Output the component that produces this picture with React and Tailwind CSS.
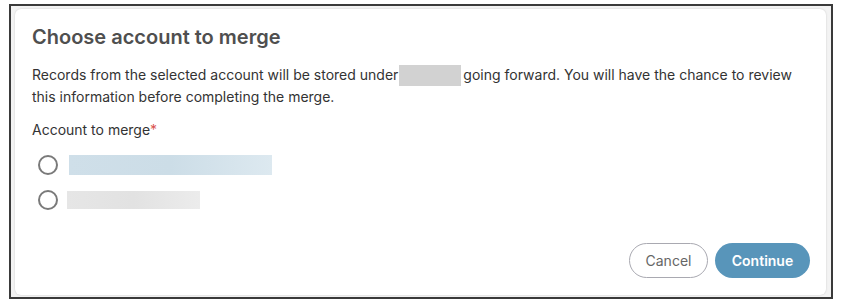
export default function App() {
  return (
    <div className="w-[841px] h-[304px] bg-white pl-[9px] pt-[4px] font-['Inter',sans-serif]">
      <div className="w-[824px] h-[295px] border-2 border-[#3a3a3a] bg-[#f3f3f3] pl-[4px] pr-[5px] pt-[3px] pb-[2px]">
        <div className="h-full rounded-md bg-white shadow-[0_0_2px_rgba(0,0,0,0.18)] pl-[17px] pr-[16px] pt-[14px] flex flex-col">
          <h1 className="text-[20px] leading-[28px] font-semibold text-[#4f4f4f]">Choose account to merge</h1>
          <p className="mt-[13px] text-[14px] leading-[22px] text-[#333]">
            Records from the selected account will be stored under
            <span className="inline-block align-middle w-[62px] h-[21px] bg-[#d2d2d2] ml-[1px] mr-[2px] -mt-[2px]"></span>
            going forward. You will have the chance to review
            <br />
            this information before completing the merge.
          </p>
          <div className="mt-[12px] text-[14px] leading-[20px] text-[#333]">
            Account to merge<span className="text-[#d9534f]">*</span>
          </div>
          <div className="mt-[15px] flex flex-col gap-[15px]">
            <label className="flex items-center h-[20px]">
              <span className="ml-[6px] w-[20px] h-[20px] rounded-full border-2 border-[#7a7a7a] bg-white"></span>
              <span className="ml-[11px] w-[203px] h-[20px] bg-gradient-to-r from-[#cfdfe9] via-[#ccdde7] to-[#dde9f0]"></span>
            </label>
            <label className="flex items-center h-[20px]">
              <span className="ml-[6px] w-[20px] h-[20px] rounded-full border-2 border-[#7a7a7a] bg-white"></span>
              <span className="ml-[9px] w-[133px] h-[18px] bg-gradient-to-r from-[#e6e6e6] via-[#e2e2e2] to-[#ececec]"></span>
            </label>
          </div>
          <div className="mt-auto mb-[17px] flex justify-end gap-[7px]">
            <button className="w-[79px] h-[35px] rounded-full border border-[#a9a9b1] bg-white text-[14px] text-[#666]">Cancel</button>
            <button className="w-[95px] h-[35px] rounded-full bg-[#5895ba] text-[14px] font-semibold text-white">Continue</button>
          </div>
        </div>
      </div>
    </div>
  );
}
